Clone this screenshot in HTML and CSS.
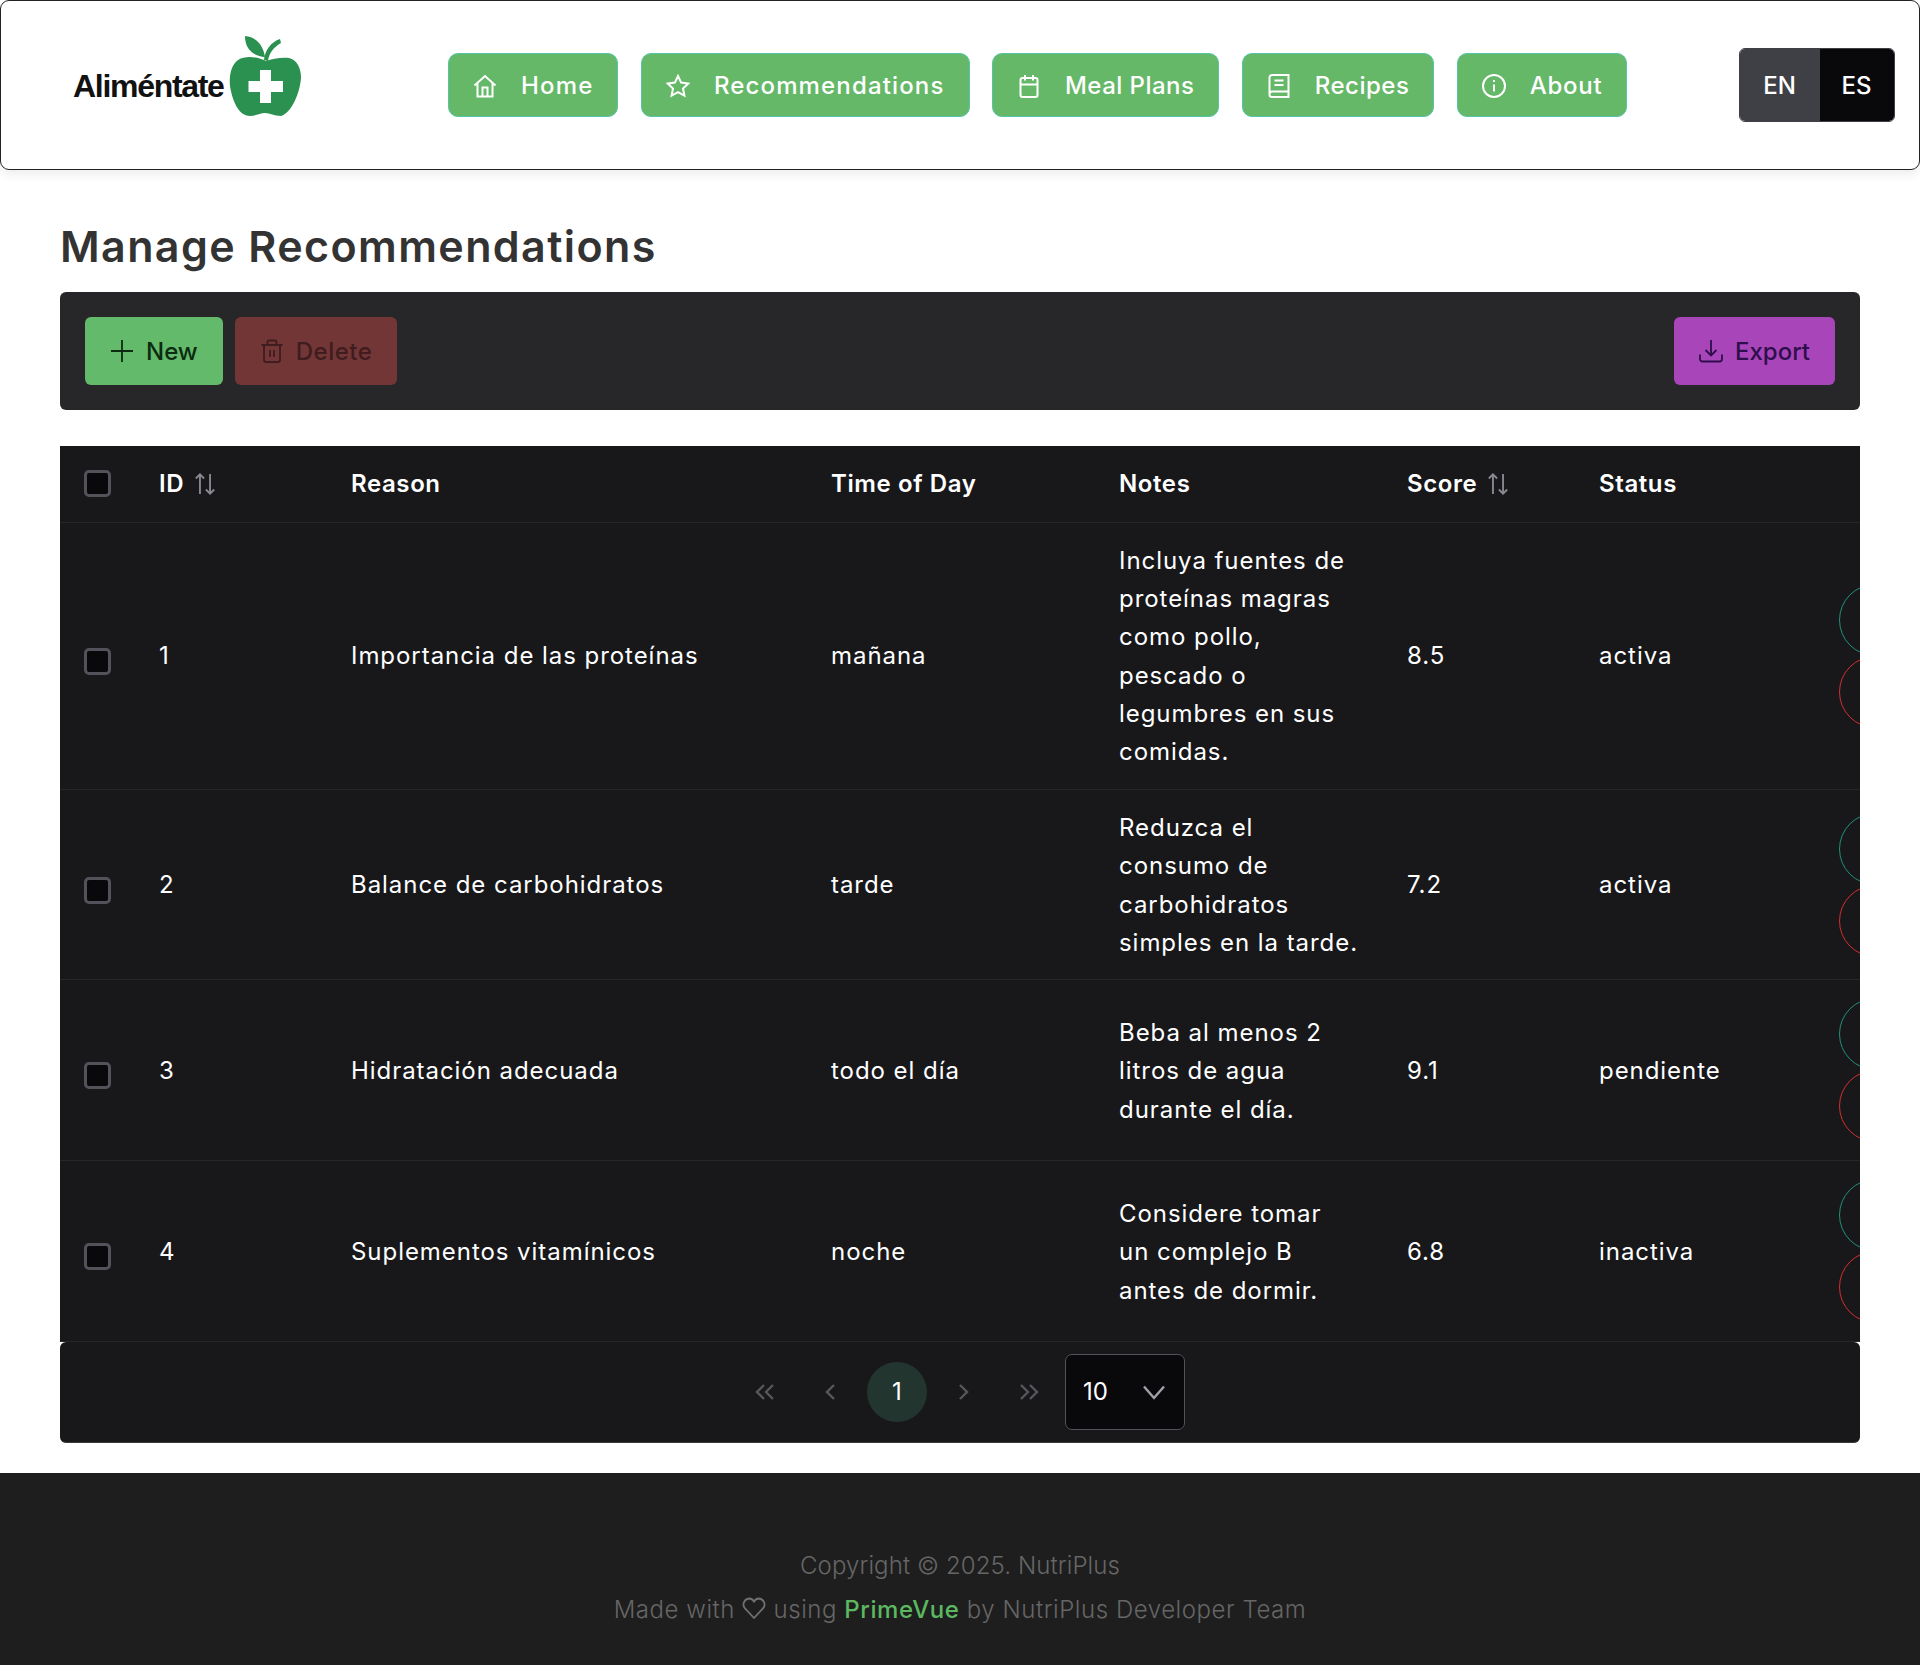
FILE: index.html
```html
<!DOCTYPE html>
<html lang="en">
  <head>
    <meta charset="UTF-8" />
    <meta name="viewport" content="width=device-width, initial-scale=1.0" />
    <title>Manage Recommendations</title>
    <link rel="stylesheet" href="styles.css">
  </head>
  <body>
    <header class="topbar">
      <a class="logo" href="#">
        <span class="logo-text">Aliméntate</span>
        <svg class="logo-apple" viewBox="228 34 76 84">
          <path fill="#2b9150" d="M245 36C256 37 263 45 265 57 254 56 245 50 245 36Z" />
          <path fill="#2b9150" d="M264 60C265 50 271 42 280 39L281 43C274 47 269 53 268 61Z" />
          <path fill="#2b9150" d="M266 61C258 57 246 55 238 60 231 65 229 76 230 86 232 99 238 116 250 116 256 116 260 113 265 113 270 113 274 116 281 116 292 113 300 92 301 78 301 68 297 60 289 58 281 57 272 59 266 61Z" />
          <path fill="#fff" d="M260 70H271V81H283V92H271V103H260V92H248.500V81H260Z" />
        </svg>
      </a>
      <nav class="nav">
        <a class="nav-btn nav-home" href="#">
          <svg class="icon" viewBox="0 0 24 24"><path d="M1.500 11.500 12 2l10.500 9.500M4.500 9v13.500h15V9M9.500 22.500v-9h5v9" /></svg>
          Home
        </a>
        <a class="nav-btn nav-rec" href="#">
          <svg class="icon" viewBox="0 0 24 24"><path d="m12 2 3.100 6.600 7.200.9-5.300 5 1.400 7.100-6.400-3.500-6.400 3.500L7 14.500l-5.300-5 7.200-.9z" /></svg>
          Recommendations
        </a>
        <a class="nav-btn nav-meal" href="#">
          <svg class="icon" viewBox="0 0 24 24"><rect x="3.500" y="4" width="17" height="19" rx="2" /><path d="M3.500 10.500h17M8 1v5.500M16 1v5.500" /></svg>
          Meal Plans
        </a>
        <a class="nav-btn nav-recipes" href="#">
          <svg class="icon" viewBox="0 0 24 24"><path d="M21.500 17.500V1H5A2.500 2.500 0 0 0 2.500 3.500v17A2.500 2.500 0 0 0 5 23h16.500v-5.500H5A2.500 2.500 0 0 0 2.500 20M7.500 6.500h9M7.500 11h9" /></svg>
          Recipes
        </a>
        <a class="nav-btn nav-about" href="#">
          <svg class="icon" viewBox="0 0 24 24"><circle cx="12" cy="12" r="11" /><path d="M12 10.500v7M12 6v2" /></svg>
          About
        </a>
      </nav>
      <div class="lang">
        <button class="lang-btn lang-en">EN</button>
        <button class="lang-btn lang-es">ES</button>
      </div>
    </header>

    <main class="content">
      <h1>Manage Recommendations</h1>

      <div class="toolbar">
        <div class="toolbar-left">
          <button class="tool-btn btn-new">
            <svg class="icon" viewBox="0 0 24 24"><path d="M12 1v22M1 12h22" /></svg>
            New
          </button>
          <button class="tool-btn btn-delete">
            <svg class="icon" viewBox="0 0 24 24"><path d="M1.500 6h21M7.500 6V3A1.500 1.500 0 0 1 9 1.500h6A1.500 1.500 0 0 1 16.500 3v3M4 6v15a2 2 0 0 0 2 2h12a2 2 0 0 0 2-2V6M10 11v7M14 11v7" /></svg>
            Delete
          </button>
        </div>
        <button class="tool-btn btn-export">
          <svg class="icon" viewBox="0 0 24 24"><path d="M12 1v15M6.500 11l5.500 5.500 5.500-5.500M1 15.500V20a2.500 2.500 0 0 0 2.500 2.500h17A2.500 2.500 0 0 0 23 20v-4.500" /></svg>
          Export
        </button>
      </div>

      <div class="table-card">
        <div class="table-wrap">
          <table class="data-table">
            <colgroup>
              <col class="col-check" />
              <col class="col-id" />
              <col class="col-reason" />
              <col class="col-time" />
              <col class="col-notes" />
              <col class="col-score" />
              <col class="col-status" />
              <col class="col-actions" />
            </colgroup>
            <thead>
              <tr>
                <th><span class="check"></span></th>
                <th>
                  <span class="th-sort">ID
                    <svg class="sort-icon" viewBox="0 0 24 24"><path d="M6.500 23V1.500M2 6l4.500-4.500L11 6M17.500 1v21.500M13 18l4.500 4.500L22 18" /></svg>
                  </span>
                </th>
                <th>Reason</th>
                <th>Time of Day</th>
                <th>Notes</th>
                <th>
                  <span class="th-sort">Score
                    <svg class="sort-icon" viewBox="0 0 24 24"><path d="M6.500 23V1.500M2 6l4.500-4.500L11 6M17.500 1v21.500M13 18l4.500 4.500L22 18" /></svg>
                  </span>
                </th>
                <th>Status</th>
                <th></th>
              </tr>
            </thead>
            <tbody>
              <tr>
                <td class="cell-check"><span class="check"></span></td>
                <td>1</td>
                <td>Importancia de las proteínas</td>
                <td>mañana</td>
                <td>Incluya fuentes de proteínas magras como pollo, pescado o legumbres en sus comidas.</td>
                <td>8.5</td>
                <td>activa</td>
                <td class="cell-actions"><div class="row-actions"><button class="round-btn round-edit" aria-label="Edit"></button><button class="round-btn round-del" aria-label="Delete"></button></div></td>
              </tr>
              <tr>
                <td class="cell-check"><span class="check"></span></td>
                <td>2</td>
                <td>Balance de carbohidratos</td>
                <td>tarde</td>
                <td>Reduzca el consumo de carbohidratos simples en la tarde.</td>
                <td>7.2</td>
                <td>activa</td>
                <td class="cell-actions"><div class="row-actions"><button class="round-btn round-edit" aria-label="Edit"></button><button class="round-btn round-del" aria-label="Delete"></button></div></td>
              </tr>
              <tr>
                <td class="cell-check"><span class="check"></span></td>
                <td>3</td>
                <td>Hidratación adecuada</td>
                <td>todo el día</td>
                <td>Beba al menos 2 litros de agua durante el día.</td>
                <td>9.1</td>
                <td>pendiente</td>
                <td class="cell-actions"><div class="row-actions"><button class="round-btn round-edit" aria-label="Edit"></button><button class="round-btn round-del" aria-label="Delete"></button></div></td>
              </tr>
              <tr>
                <td class="cell-check"><span class="check"></span></td>
                <td>4</td>
                <td>Suplementos vitamínicos</td>
                <td>noche</td>
                <td>Considere tomar un complejo B antes de dormir.</td>
                <td>6.8</td>
                <td>inactiva</td>
                <td class="cell-actions"><div class="row-actions"><button class="round-btn round-edit" aria-label="Edit"></button><button class="round-btn round-del" aria-label="Delete"></button></div></td>
              </tr>
            </tbody>
          </table>
        </div>

        <div class="paginator">
          <span class="page-btn"><svg class="icon" viewBox="0 0 24 24"><path d="M11 5 4 12l7 7M20 5l-7 7 7 7" /></svg></span>
          <span class="page-btn"><svg class="icon" viewBox="0 0 24 24"><path d="m15 5-7 7 7 7" /></svg></span>
          <span class="page-btn page-active">1</span>
          <span class="page-btn"><svg class="icon" viewBox="0 0 24 24"><path d="m9 5 7 7-7 7" /></svg></span>
          <span class="page-btn"><svg class="icon" viewBox="0 0 24 24"><path d="m4 5 7 7-7 7M13 5l7 7-7 7" /></svg></span>
          <div class="page-size">
            <span>10</span>
            <svg class="icon" viewBox="0 0 24 24"><path d="M2 6.500 12 18 22 6.500" /></svg>
          </div>
        </div>
      </div>
    </main>

    <footer class="footer">
      <div class="footer-copy">Copyright © 2025. NutriPlus</div>
      <div class="footer-line">
        Made with
        <svg class="heart" viewBox="0 0 24 24"><path d="M12 22 2.800 12.200A6 6 0 0 1 7 2.500c2.200 0 3.900 1.100 5 3 1.100-1.900 2.800-3 5-3a6 6 0 0 1 4.200 9.700z" /></svg>
        using <a href="#" class="footer-link">PrimeVue</a> by NutriPlus Developer Team
      </div>
    </footer>
  </body>
</html>
```

FILE: styles.css
```css
* {
  box-sizing: border-box;
}
body {
  margin: 0;
  font-family: Inter, "Noto Sans", sans-serif;
  font-size: 24px;
  line-height: 1.6;
  color: #333;
  background-color: #fff;
}
a {
  text-decoration: none;
}
button {
  font-family: inherit;
}
.icon {
  width: 24px;
  height: 24px;
  flex: none;
  fill: none;
  stroke: currentColor;
  stroke-width: 1.8;
}

/* top bar */
.topbar {
  display: flex;
  align-items: center;
  height: 170px;
  padding: 0 24.5px 0 72px;
  border: 1.5px solid #222;
  border-radius: 9px;
  box-shadow: 0 4px 12px rgba(0, 0, 0, 0.08);
}
.logo {
  display: flex;
  align-items: center;
  width: 375px;
  height: 84px;
  margin-top: -18px;
}
.logo-text {
  margin-top: 21px;
  font-family: "Liberation Sans", Arial, sans-serif;
  font-size: 32px;
  font-weight: 700;
  letter-spacing: -1.3px;
  color: #111;
}
.logo-apple {
  width: 76px;
  height: 84px;
  margin-left: 4px;
}
.nav {
  display: flex;
  gap: 22.5px;
}
.nav-btn {
  display: flex;
  align-items: center;
  gap: 24px;
  height: 64px;
  padding: 2px 24px 0;
  border: 1px solid #55c4a8;
  border-radius: 10px;
  background-color: #65b868;
  color: #fff;
  font-weight: 500;
  letter-spacing: 0.7px;
}
.nav-btn .icon {
  stroke-width: 2;
}
.nav-home,
.nav-rec {
  letter-spacing: 1.15px;
}
.nav-meal {
  letter-spacing: 0.45px;
}
.nav-recipes {
  letter-spacing: 0.5px;
}
.lang {
  display: flex;
  margin-left: auto;
  height: 74px;
  border: 1px solid #3f3f46;
  border-radius: 6px;
  overflow: hidden;
}
.lang-btn {
  border: none;
  color: #fff;
  font-size: 24px;
  font-weight: 500;
}
.lang-en {
  width: 80px;
  background-color: #3f3f46;
}
.lang-es {
  width: 74px;
  background-color: #09090b;
}

/* main area */
.content {
  padding: 0 60px;
}
.content h1 {
  margin: 0;
  padding-top: 47px;
  height: 122px;
  font-size: 43px;
  font-weight: 600;
  line-height: 58px;
  letter-spacing: 1.4px;
  color: #333;
}
.toolbar {
  display: flex;
  justify-content: space-between;
  align-items: center;
  height: 118px;
  padding: 0 25px;
  border-radius: 6px;
  background-color: #27272a;
}
.toolbar-left {
  display: flex;
  gap: 12px;
}
.tool-btn {
  display: flex;
  align-items: center;
  gap: 12px;
  height: 68px;
  padding: 0 25px;
  border: none;
  border-radius: 6px;
  font-size: 24px;
  font-weight: 500;
}
.btn-new {
  background-color: #63ba6a;
  color: #0d2b11;
}
.btn-delete {
  background-color: #723636;
  color: #3f1c1e;
  letter-spacing: 0.5px;
}
.btn-export {
  background-color: #a846b9;
  color: #2e0e4c;
}

/* table */
.table-card {
  margin-top: 36px;
  color: #fff;
}
.table-wrap {
  overflow: hidden;
  background-color: #18181b;
}
.data-table {
  width: 1920px;
  table-layout: fixed;
  border-collapse: collapse;
  letter-spacing: 0.95px;
}
.col-check {
  width: 75px;
}
.col-id {
  width: 192px;
}
.col-reason {
  width: 480px;
}
.col-time {
  width: 288px;
}
.col-notes {
  width: 288px;
}
.col-score {
  width: 192px;
}
.col-status {
  width: 240px;
}
.col-actions {
  width: 165px;
}
.data-table th,
.data-table td {
  padding: 18px 24px;
  border-bottom: 1px solid #27272a;
  text-align: left;
  vertical-align: middle;
}
.data-table td {
  padding-top: 19px;
  padding-bottom: 17px;
}
.data-table th {
  height: 76px;
  font-weight: 600;
  letter-spacing: 0.6px;
}
.data-table .cell-check {
  padding-top: 29px;
  padding-bottom: 18px;
}
.data-table .cell-actions {
  padding-top: 18px;
  padding-bottom: 18px;
}
.check {
  display: block;
  width: 27px;
  height: 27px;
  border: 3px solid #52525b;
  border-radius: 5px;
  background-color: #09090b;
}
.th-sort {
  display: flex;
  align-items: center;
  gap: 10px;
}
.sort-icon {
  width: 22px;
  height: 22px;
  fill: none;
  stroke: #8a8a94;
  stroke-width: 2;
}
.row-actions {
  display: flex;
  flex-direction: column;
  height: 144px;
}
.round-btn {
  width: 72px;
  height: 72px;
  padding: 0;
  border: 1.5px solid;
  border-radius: 50%;
  background: none;
}
.round-edit {
  border-color: #22917a;
}
.round-del {
  border-color: #d32f2f;
}

/* paginator */
.paginator {
  display: flex;
  justify-content: center;
  align-items: center;
  gap: 6px;
  height: 101px;
  border-radius: 6px;
  border-bottom: 1px solid #3a3a3d;
  background-color: #18181b;
}
.page-btn {
  display: flex;
  justify-content: center;
  align-items: center;
  width: 60px;
  height: 60px;
  border-radius: 50%;
  color: #57575c;
}
.page-btn .icon {
  stroke-width: 2.4;
}
.page-active {
  background-color: #22352f;
  color: #fff;
}
.page-size {
  display: flex;
  justify-content: space-between;
  align-items: center;
  width: 120px;
  height: 76px;
  padding: 0 18px 0 17px;
  border: 1px solid #52525b;
  border-radius: 7px;
  background-color: #09090b;
}
.page-size .icon {
  color: #a1a1aa;
  stroke-width: 2.4;
}

/* footer */
.footer {
  margin-top: 30px;
  height: 192px;
  padding-top: 71px;
  background-color: #1e1e1e;
  color: #666;
  font-weight: 300;
  text-align: center;
  line-height: 44px;
}
.footer-copy {
  letter-spacing: 0.1px;
}
.footer-line {
  letter-spacing: 0.55px;
}
.heart {
  width: 24px;
  height: 24px;
  fill: none;
  stroke: #707070;
  stroke-width: 1.8;
  vertical-align: -2px;
}
.footer-link {
  color: #5cb860;
  font-weight: 500;
}
```
